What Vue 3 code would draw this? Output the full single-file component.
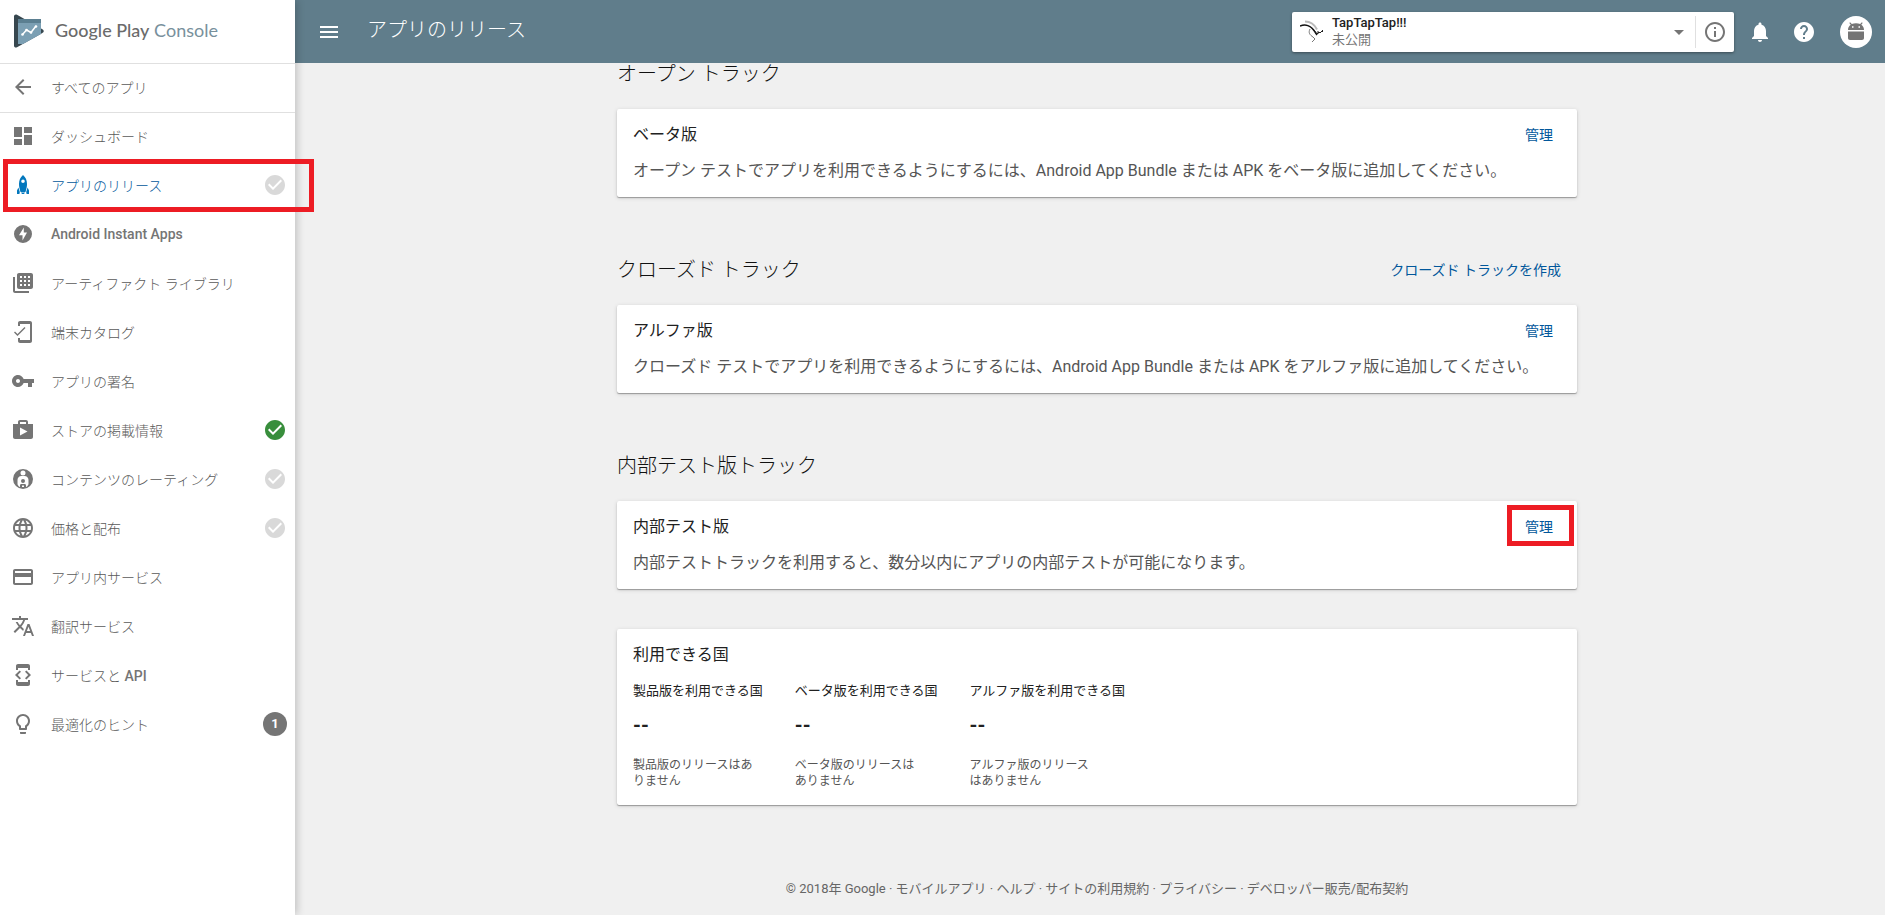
<template>
  <div class="console">
    <aside class="sidebar">
      <a href="#" class="brand">
        <svg class="brand-logo" viewBox="0 0 32 36" aria-hidden="true">
          <path d="M1 3.500C1 1.800 2.500 1 4 1.800L29 16c2.400 1.300 2.400 3 0 4.300L4 34.300C2.500 35 1 34.300 1 32.500z" fill="#37474f" />
          <path d="M5 6h23v15L10 31H5z" fill="#7b9fb3" />
          <path d="M5 6h23v4H5z" fill="#5b7f91" />
          <path d="M9.500 21.500l4-4.500 4.500 2.500 5-6.500" fill="none" stroke="#fff" stroke-width="1.500" />
          <circle cx="9.500" cy="21.500" r="1.300" fill="#fff" />
          <circle cx="13.500" cy="17" r="1.300" fill="#fff" />
          <circle cx="18" cy="19.500" r="1.300" fill="#fff" />
          <circle cx="23" cy="13.500" r="1.300" fill="#fff" />
        </svg>
        <span class="brand-name"><strong>Google Play</strong> Console</span>
      </a>
      <a href="#" class="nav-link">
        <svg class="icon" viewBox="0 0 24 24" aria-hidden="true">
          <path d="M20 11H7.830l5.590-5.590L12 4l-8 8 8 8 1.410-1.410L7.830 13H20v-2z" />
        </svg>
        <span class="nav-text">すべてのアプリ</span>
      </a>
      <nav class="menu">
        <a v-for="item in menu" :key="item.icon" href="#" class="nav-link" :class="{ active: item.active }">
          <svg class="icon" viewBox="0 0 24 24" aria-hidden="true">
            <path :d="item.icon" fill-rule="evenodd" />
          </svg>
          <span class="nav-text">{{ item.label }} <b v-if="item.latin">{{ item.latin }}</b></span>
          <svg v-if="item.status" class="status" :class="item.status" viewBox="0 0 24 24" aria-hidden="true">
            <path d="M12 2C6.480 2 2 6.480 2 12s4.480 10 10 10 10-4.480 10-10S17.520 2 12 2zm-2 15l-5-5 1.410-1.410L10 14.170l7.590-7.590L19 8l-9 9z" />
          </svg>
          <span v-if="item.count" class="count">{{ item.count }}</span>
          <span v-if="item.active" class="marker marker-nav"></span>
        </a>
      </nav>
    </aside>

    <div class="page">
      <header class="topbar">
        <button class="icon-btn" aria-label="メニュー">
          <svg class="icon" viewBox="0 0 24 24"><path d="M3 18h18v-2H3v2zm0-5h18v-2H3v2zm0-7v2h18V6H3z" /></svg>
        </button>
        <h1 class="page-title">アプリのリリース</h1>
        <div class="app-picker">
          <button class="app-select" aria-haspopup="listbox">
            <svg class="app-icon" viewBox="0 0 24 24" aria-hidden="true">
              <path d="M5 1.500c5 0 9 2 12 8" fill="none" stroke="#bbb" stroke-width="2" />
              <path d="M0 6c5-2 11-1 15 6l2 3" fill="none" stroke="#111" stroke-width="1.500" />
              <path d="M10 9c-2 4 0 6 3 8l2 2-3 3" fill="none" stroke="#777" />
              <path d="M14 10l3 4 2-2 1 1 3-3M18 11v3M22 11l1 1" fill="none" stroke="#222" />
            </svg>
            <span class="app-info">
              <span class="app-name">TapTapTap!!!</span>
              <span class="app-status">未公開</span>
            </span>
            <svg class="icon caret" viewBox="0 0 24 24" aria-hidden="true"><path d="M7 10l5 5 5-5z" /></svg>
          </button>
          <button class="app-details" aria-label="アプリの情報">
            <svg class="icon" viewBox="0 0 24 24">
              <path d="M11 17h2v-6h-2v6zm1-15C6.480 2 2 6.480 2 12s4.480 10 10 10 10-4.480 10-10S17.520 2 12 2zm0 18c-4.410 0-8-3.590-8-8s3.590-8 8-8 8 3.590 8 8-3.590 8-8 8zM11 9h2V7h-2v2z" />
            </svg>
          </button>
        </div>
        <button class="icon-btn" aria-label="通知">
          <svg class="icon" viewBox="0 0 24 24">
            <path d="M12 22c1.100 0 2-.9 2-2h-4c0 1.100.89 2 2 2zm6-6v-5c0-3.070-1.640-5.640-4.500-6.320V4c0-.83-.67-1.500-1.500-1.500s-1.500.67-1.500 1.500v.68C7.630 5.360 6 7.920 6 11v5l-2 2v1h16v-1l-2-2z" />
          </svg>
        </button>
        <button class="icon-btn" aria-label="ヘルプ">
          <svg class="icon" viewBox="0 0 24 24">
            <path d="M12 2C6.480 2 2 6.480 2 12s4.480 10 10 10 10-4.480 10-10S17.520 2 12 2zm1 17h-2v-2h2v2zm2.070-7.750l-.9.920C13.450 12.900 13 13.500 13 15h-2v-.5c0-1.100.45-2.100 1.170-2.830l1.240-1.260c.37-.36.590-.86.590-1.410 0-1.100-.9-2-2-2s-2 .9-2 2H8c0-2.210 1.790-4 4-4s4 1.790 4 4c0 .88-.36 1.680-.93 2.250z" />
          </svg>
        </button>
        <button class="avatar" aria-label="アカウント">
          <svg viewBox="0 0 32 32">
            <path d="M8 14c0-2.400 1-4.200 2.700-5.300L9.300 7l.8-.7 1.700 1.800c2.400-1 6-1 8.400 0l1.700-1.800.8.700-1.400 1.700C23 9.800 24 11.600 24 14zM12 10.300v1.500h1.500v-1.500zM18.500 10.300v1.500H20v-1.500zM8 15.500h16V22c0 1-.7 2-2 2H10c-1.300 0-2-1-2-2z" fill="#757575" fill-rule="evenodd" />
          </svg>
        </button>
      </header>

      <main class="content">
        <section v-for="track in tracks" :key="track.heading" class="track">
          <div class="track-head">
            <h2>{{ track.heading }}</h2>
            <a v-if="track.create" href="#" class="link">{{ track.create }}</a>
          </div>
          <article class="card">
            <div class="card-head">
              <h3>{{ track.title }}</h3>
              <a href="#" class="link manage">管理<span v-if="track.marked" class="marker marker-manage"></span></a>
            </div>
            <p>{{ track.text }}</p>
          </article>
        </section>

        <section class="card countries">
          <h3>利用できる国</h3>
          <table>
            <thead>
              <tr>
                <th v-for="c in countries" :key="c.label" scope="col">{{ c.label }}</th>
              </tr>
            </thead>
            <tbody>
              <tr class="values">
                <td v-for="c in countries" :key="c.label">--</td>
              </tr>
              <tr class="notes">
                <td v-for="c in countries" :key="c.label"><div class="note">{{ c.note }}</div></td>
              </tr>
            </tbody>
          </table>
        </section>

        <footer class="footer">
          © 2018年 Google<template v-for="link in footerLinks" :key="link"> · <a href="#">{{ link }}</a></template>
        </footer>
      </main>
    </div>
  </div>
</template>

<script setup>
const menu = [
  {
    label: 'ダッシュボード',
    icon: 'M3 13h8V3H3v10zm0 8h8v-6H3v6zm10 0h8V11h-8v10zm0-18v6h8V3h-8z',
  },
  {
    label: 'アプリのリリース',
    active: true,
    status: 'pending',
    icon: 'M12 2c2.800 2.300 4 5.500 4 9 0 2.500-.6 5-1.500 8h-5C8.600 16 8 13.500 8 11c0-3.500 1.200-6.700 4-9zM12 6.500a1.800 1.800 0 1 0 0 3.600 1.800 1.800 0 0 0 0-3.600zM7.400 14.500l1.400 4.500-.4 2H6v-3.500zM16.600 14.500L15.200 19l.4 2H18v-3.500zM10 19.500h4l-1 1.500h-2z',
  },
  {
    latin: 'Android Instant Apps',
    icon: 'M12 3a9 9 0 1 0 0 18 9 9 0 0 0 0-18zM12.800 5.500v5H16l-4.500 8v-5.300H8z',
  },
  {
    label: 'アーティファクト ライブラリ',
    icon: 'M2 6h2v14h14v2H4c-1.100 0-2-.9-2-2zM8 2h12c1.100 0 2 .9 2 2v12c0 1.100-.9 2-2 2H8c-1.100 0-2-.9-2-2V4c0-1.100.9-2 2-2zM9 5v2h2V5zM13 5v2h2V5zM17 5v2h2V5zM9 9v2h2V9zM13 9v2h2V9zM17 9v2h2V9zM9 13v2h2v-2zM13 13v2h2v-2zM17 13v2h2v-2z',
  },
  {
    label: '端末カタログ',
    icon: 'M19 1H9c-1.100 0-2 .9-2 2v3h2V4h10v16H9v-2H7v3c0 1.100.9 2 2 2h10c1.100 0 2-.9 2-2V3c0-1.100-.9-2-2-2zM6.500 14L4 11.500l-1 1L6.500 16l8-8-1-1z',
  },
  {
    label: 'アプリの署名',
    icon: 'M12.650 10C11.830 7.670 9.610 6 7 6c-3.310 0-6 2.690-6 6s2.690 6 6 6c2.610 0 4.830-1.670 5.650-4H17v4h4v-4h2v-4H12.650zM7 14c-1.100 0-2-.9-2-2s.9-2 2-2 2 .9 2 2-.9 2-2 2z',
  },
  {
    label: 'ストアの掲載情報',
    status: 'done',
    icon: 'M17 6V4c0-1.100-.9-2-2-2H9c-1.100 0-2 .9-2 2v2H2v13c0 1.100.9 2 2 2h16c1.100 0 2-.9 2-2V6zM9 4h6v2H9zM9 17.500v-8l7.500 4z',
  },
  {
    label: 'コンテンツのレーティング',
    status: 'pending',
    icon: 'M12 2a10 10 0 1 0 0 20 10 10 0 0 0 0-20zM12 3.500a2.500 2.500 0 1 1 0 5 2.500 2.500 0 0 1 0-5zM10.500 9h3c2.500 0 4 1.700 4 4v4c0 1-1 2.300-2.500 3v-1.500c0-1-.5-1.500-1.500-1.500h-3c-1 0-1.500.5-1.500 1.500V20c-1.500-.7-2.500-2-2.500-3v-4c0-2.300 1.500-4 4-4zM12 12a2 2 0 1 0 0 4 2 2 0 0 0 0-4zM11 18.500h2V20h-2z',
  },
  {
    label: '価格と配布',
    status: 'pending',
    icon: 'M11.990 2C6.470 2 2 6.480 2 12s4.470 10 9.990 10C17.520 22 22 17.520 22 12S17.520 2 11.990 2zm6.930 6h-2.950c-.32-1.250-.78-2.450-1.380-3.560 1.840.63 3.370 1.910 4.330 3.560zM12 4.040c.83 1.200 1.480 2.530 1.910 3.960h-3.820c.43-1.430 1.080-2.760 1.910-3.960zM4.260 14C4.100 13.360 4 12.690 4 12s.1-1.360.26-2h3.380c-.08.66-.14 1.320-.14 2 0 .68.06 1.340.14 2H4.260zm.82 2h2.950c.32 1.250.78 2.450 1.380 3.560-1.840-.63-3.370-1.900-4.330-3.560zm2.950-8H5.080c.96-1.660 2.490-2.930 4.330-3.560C8.810 5.550 8.350 6.750 8.030 8zM12 19.960c-.83-1.200-1.480-2.530-1.910-3.960h3.820c-.43 1.430-1.080 2.760-1.910 3.960zM14.340 14H9.660c-.09-.66-.16-1.320-.16-2 0-.68.07-1.350.16-2h4.680c.09.65.16 1.320.16 2 0 .68-.07 1.340-.16 2zm.25 5.560c.6-1.110 1.060-2.310 1.380-3.560h2.950c-.96 1.650-2.490 2.930-4.330 3.560zM16.360 14c.08-.66.14-1.320.14-2 0-.68-.06-1.340-.14-2h3.380c.16.64.26 1.310.26 2s-.1 1.360-.26 2h-3.380z',
  },
  {
    label: 'アプリ内サービス',
    icon: 'M20 4H4c-1.110 0-1.990.89-1.990 2L2 18c0 1.110.89 2 2 2h16c1.110 0 2-.89 2-2V6c0-1.110-.89-2-2-2zm0 14H4v-6h16v6zm0-10H4V6h16v2z',
  },
  {
    label: '翻訳サービス',
    icon: 'M12.870 15.070l-2.540-2.510.03-.03c1.740-1.940 2.980-4.170 3.710-6.530H17V4h-7V2H8v2H1v1.990h11.170C11.500 7.920 10.440 9.750 9 11.350 8.070 10.320 7.300 9.190 6.690 8h-2c.73 1.630 1.730 3.170 2.980 4.560l-5.090 5.020L4 19l5-5 3.110 3.110.76-2.040zM18.500 10h-2L12 22h2l1.120-3h4.750L21 22h2l-4.500-12zm-2.620 7l1.620-4.330L19.120 17h-3.240z',
  },
  {
    label: 'サービスと',
    latin: 'API',
    icon: 'M7 5h10v2h2V3c0-1.100-.9-1.990-2-1.990L7 1c-1.100 0-2 .9-2 2v4h2V5zm8.410 11.590L20 12l-4.590-4.590L14 8.830 17.170 12 14 15.170l1.410 1.420zM10 15.170L6.830 12 10 8.830 8.590 7.410 4 12l4.590 4.590L10 15.170zM17 19H7v-2H5v4c0 1.100.9 2 2 2h10c1.100 0 2-.9 2-2v-4h-2v2z',
  },
  {
    label: '最適化のヒント',
    count: 1,
    icon: 'M9 21c0 .55.45 1 1 1h4c.55 0 1-.45 1-1v-1H9v1zm3-19C8.140 2 5 5.140 5 9c0 2.380 1.190 4.470 3 5.740V17c0 .55.45 1 1 1h6c.55 0 1-.45 1-1v-2.260c1.810-1.270 3-3.360 3-5.740 0-3.860-3.140-7-7-7zm2.850 11.100l-.85.6V16h-4v-2.300l-.85-.6C7.800 12.160 7 10.630 7 9c0-2.760 2.240-5 5-5s5 2.240 5 5c0 1.630-.8 3.160-2.150 4.100z',
  },
];

const tracks = [
  {
    heading: 'オープン トラック',
    title: 'ベータ版',
    text: 'オープン テストでアプリを利用できるようにするには、Android App Bundle または APK をベータ版に追加してください。',
  },
  {
    heading: 'クローズド トラック',
    create: 'クローズド トラックを作成',
    title: 'アルファ版',
    text: 'クローズド テストでアプリを利用できるようにするには、Android App Bundle または APK をアルファ版に追加してください。',
  },
  {
    heading: '内部テスト版トラック',
    title: '内部テスト版',
    text: '内部テストトラックを利用すると、数分以内にアプリの内部テストが可能になります。',
    marked: true,
  },
];

const countries = [
  { label: '製品版を利用できる国', note: '製品版のリリースはありません' },
  { label: 'ベータ版を利用できる国', note: 'ベータ版のリリースはありません' },
  { label: 'アルファ版を利用できる国', note: 'アルファ版のリリースはありません' },
];

const footerLinks = ['モバイルアプリ', 'ヘルプ', 'サイトの利用規約', 'プライバシー', 'デベロッパー販売/配布契約'];
</script>

<style>
body {
  background: #f0f0f0;
}
</style>

<style scoped>
.console {
  display: grid;
  grid-template-columns: 295px 1fr;
  min-height: 100vh;
  font-family: Roboto, "Noto Sans CJK JP", sans-serif;
  font-size: 14px;
  color: #212121;
}

.console * { box-sizing: border-box; }

a { color: inherit; text-decoration: none; }
h1, h2, h3, p { margin: 0; font-weight: 300; }

button {
  display: flex;
  align-items: center;
  border: none;
  background: none;
  padding: 0;
  font: inherit;
  color: inherit;
  text-align: left;
  cursor: pointer;
}

.icon { width: 24px; height: 24px; fill: currentColor; flex: none; }

/* sidebar */
.sidebar {
  position: relative;
  z-index: 2;
  background: #fff;
  box-shadow: 2px 0 8px rgba(0, 0, 0, 0.2);
}

.brand {
  display: flex;
  align-items: center;
  gap: 10px;
  height: 64px;
  padding: 0 13px 2px;
  border-bottom: 1px solid #e0e0e0;
}

.brand-logo { width: 32px; height: 36px; }
.brand-name {
  padding-bottom: 2px;
  font-family: Lato, sans-serif;
  font-size: 18px;
  color: #78909c;
}
.brand-name strong { font-weight: 500; color: #6b6b6b; }

.nav-link {
  position: relative;
  display: flex;
  align-items: center;
  gap: 16px;
  height: 48px;
  padding: 0 10px 2px 11px;
  color: #757575;
}

.menu { box-shadow: inset 0 1px #e0e0e0; }
.menu .nav-link { height: 49px; padding-right: 8px; }
.nav-text { flex: 1; font-weight: 300; color: #5a5a5a; }
.nav-text b { font-weight: 500; color: #757575; }
.active .nav-text { color: #01579b; }
.active .icon { color: #0277bd; }

.status { width: 24px; height: 24px; }
.status.pending { fill: #d9d9d9; }
.status.done { fill: #388e3c; }

.count {
  width: 24px;
  border-radius: 50%;
  background: #757575;
  color: #fff;
  font-size: 13px;
  font-weight: 700;
  line-height: 24px;
  text-align: center;
}

/* red frames over the highlighted controls */
.marker { position: absolute; border: 5px solid #ed1c24; pointer-events: none; }
.marker-nav { inset: -2px -19px -2px 3px; }
.marker-manage { inset: -10px -21px -7px -18px; }

/* top bar */
.page { min-width: 0; }

.topbar {
  display: flex;
  align-items: center;
  height: 63px;
  padding: 0 13px 0 22px;
  background: #607d8b;
  color: #fff;
}

.page-title { flex: 1; margin-left: 26px; padding-bottom: 4px; font-size: 20px; line-height: 28px; }

.app-picker {
  display: flex;
  align-items: center;
  width: 442px;
  height: 40px;
  margin-right: 14px;
  border-radius: 2px;
  background: #fff;
  box-shadow: 0 1px 3px rgba(0, 0, 0, 0.4);
}

.app-select { flex: 1; height: 40px; padding: 0 4px 0 8px; gap: 8px; }
.app-icon { width: 24px; height: 24px; }
.app-info {
  flex: 1;
  display: flex;
  flex-direction: column;
  padding-bottom: 2px;
  font-size: 13px;
  line-height: 17px;
}
.app-name { color: #212121; font-weight: 500; }
.app-status { color: #757575; }
.caret { color: #757575; }
.app-details {
  justify-content: center;
  width: 39px;
  height: 32px;
  border-left: 1px solid #e0e0e0;
  color: #757575;
}

.icon-btn + .icon-btn { margin-left: 20px; }

.avatar {
  width: 32px;
  height: 32px;
  margin-left: 24px;
  border-radius: 50%;
  background: #fff;
}

/* tracks */
.content { max-width: 974px; margin: 0 auto; padding-left: 14px; }

.track { margin-bottom: 62px; }
.track:nth-of-type(3) { margin-bottom: 40px; }

.track-head {
  display: flex;
  align-items: center;
  justify-content: space-between;
  height: 22px;
  margin-bottom: 24px;
  padding-right: 16px;
}

.track-head h2 { font-size: 20px; line-height: 22px; color: #111; }
.link { color: #01579b; line-height: 24px; }

.card {
  padding: 14px 16px;
  border-radius: 2px;
  background: #fff;
  box-shadow: 0 1px 1px rgba(0, 0, 0, 0.3), 0 1px 4px rgba(0, 0, 0, 0.15);
}

.card h3 { font-size: 16px; line-height: 24px; font-weight: 400; }
.card p { margin-top: 12px; font-size: 16px; line-height: 24px; font-weight: 400; color: #555; }
.card-head { display: flex; justify-content: space-between; padding-right: 8px; }
.manage { position: relative; }

/* countries */
.countries { padding-bottom: 16px; }
table { border-collapse: collapse; margin-top: 14px; }
th, td { padding: 0 32px 0 0; text-align: left; vertical-align: top; }
th { font-size: 13px; line-height: 20px; font-weight: 400; }
.values td { padding-top: 12px; font-size: 20px; line-height: 24px; font-weight: 700; }
.notes td { padding-top: 20px; font-size: 12px; line-height: 16px; color: #555; }
.note { width: 124px; }

.footer {
  padding: 74px 0 16px;
  font-size: 13px;
  line-height: 20px;
  color: #666;
  text-align: center;
}
</style>
